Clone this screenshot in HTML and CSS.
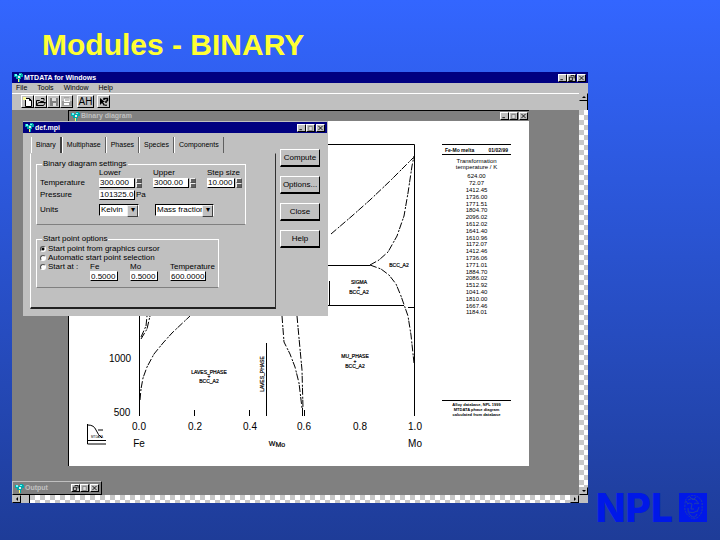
FILE: index.html
```
<!DOCTYPE html>
<html lang="en">
<head>
<meta charset="utf-8">
<title>Modules - BINARY</title>
<link rel="stylesheet" href="styles.css">
</head>
<body>
<svg class="defs" aria-hidden="true">
  <symbol id="app" viewBox="0 0 9 9"><path d="M0 1h3v1h2V0h3v1h1v3H7v2H6v3H4V6H2V4H0z" fill="#0aa"/><path d="M1 1h2v2H1zM5 1h2v1H5z" fill="#6ff"/><path d="M4 3h2v2H4z" fill="#eee"/><path d="M4 6h1v3H4z" fill="#ff6"/></symbol>
  <symbol id="min" viewBox="0 0 7 7"><path d="M1 5h3v1H1z"/></symbol>
  <symbol id="max" viewBox="0 0 7 7"><path d="M1 1h5v5H1z" fill="#ddd"/><path d="M1 1h5v1H1zM1 2h1v4H1zM5 2h1v4H5zM1 6h5v1H1z" fill="#777"/></symbol>
  <symbol id="restore" viewBox="0 0 7 7"><path d="M2.500 .5h4v3.500M1 2.500h3.500v4H1z" fill="none" stroke="#000"/></symbol>
  <symbol id="close" viewBox="0 0 7 7"><path d="M1 1l5 5M6 1L1 6" stroke="#000" fill="none"/></symbol>
</svg>
<main class="slide">
  <h1 class="title">Modules - BINARY</h1>

  <section class="app">
    <header class="bar">
      <svg class="ico"><use href="#app"/></svg><span class="name">MTDATA for Windows</span>
      <button class="wb" aria-label="Minimize"><svg><use href="#min"/></svg></button><button class="wb" aria-label="Restore"><svg><use href="#restore"/></svg></button><button class="wb last" aria-label="Close"><svg><use href="#close"/></svg></button>
    </header>
    <nav class="menu"><a href="#">File</a><a href="#">Tools</a><a href="#">Window</a><a href="#">Help</a></nav>
    <div class="view">
      <div class="work">
        <div class="tools">
          <button aria-label="New"><svg viewBox="0 0 10 10"><path d="M2.500 1.500h4l2 2v6h-6z" fill="#fff" stroke="#000"/><path d="M6.500 1.500v2h2" fill="none" stroke="#000"/><path d="M0 0h3v3H0z" fill="#ff9"/></svg></button>
          <button aria-label="Open"><svg viewBox="0 0 10 10"><path d="M.5 8.500v-5h3l1 1h3v1.500M.5 8.500l2-3h7l-2 3zM5 1.500h3v2" fill="none" stroke="#000"/></svg></button>
          <button aria-label="Save"><svg viewBox="0 0 10 10"><path d="M1 1h8v8H1z" fill="#808080"/><path d="M3 1h4v3H3zM4 6h3v3H4z" fill="#ddd"/></svg></button>
          <button aria-label="Print"><svg viewBox="0 0 10 10"><path d="M0 4h10v5H0z" fill="#999"/><path d="M2 1h5l1 4H2zM2 6h5v2H2z" fill="#fff"/><path d="M2 1h5M3 3h4" stroke="#888"/></svg></button>
          <button class="find">AH</button>
          <button aria-label="Context help"><svg viewBox="0 0 10 10"><path d="M1 1v7l2-2 2 3 1-1-2-3h2z"/><path d="M5 3V1.500h3.500v2l-1.500 1V6M7 7.500v1.500" fill="none" stroke="#000" stroke-width="1.500"/></svg></button>
        </div>
        <div class="desktop">

          <section class="win diagram">
            <header class="bar off">
              <svg class="ico"><use href="#app"/></svg><span class="name">Binary diagram</span>
              <button class="wb" aria-label="Minimize"><svg><use href="#min"/></svg></button><button class="wb" aria-label="Maximize"><svg><use href="#max"/></svg></button><button class="wb last" aria-label="Close"><svg><use href="#close"/></svg></button>
            </header>
            <div class="sheet">
              <svg class="chart" viewBox="69 121 373 345" role="img" aria-label="Fe-Mo binary phase diagram">
                <g class="ln">
                  <path d="M139.500 416V144.500H414.500V416M266.500 343v73M194.500 410v6M249.500 410v6M302.500 408v8M304.500 410v6M328 265.500h42M328 305.500h76M329.500 281v24M408 307.500h6"/>
                </g>
                <g class="ln dash">
                  <path d="M140 400L141 389L143 378L147 367L154 354L163 343L172 333L190 316"/>
                  <path d="M141 339L147 329L150 316M141 337L146 326L147 316"/>
                  <path d="M282 316L284 342L290 354L295 367L299 383L302 408"/>
                  <path d="M297 316L299 338L302 370L303 408"/>
                  <path d="M331 234L352 216L370 200L390 181L413 158"/>
                  <path d="M370 265L379 260L388 252L397 236L404 216L408 193L412 166L414 156"/>
                  <path d="M370 265L381 269L389 275L396 284L401 296L408 316L411 335L414 363"/>
                </g>
                <g class="ax">
                  <text x="120" y="362">1000</text><text x="122" y="416">500</text>
                  <text x="139" y="430">0.0</text><text x="195" y="430">0.2</text><text x="250" y="430">0.4</text><text x="304" y="430">0.6</text><text x="360" y="430">0.8</text><text x="415" y="430">1.0</text>
                  <text x="139" y="447">Fe</text><text x="415" y="447">Mo</text>
                </g>
                <g class="ph">
                  <text class="w" x="277" y="446">W<tspan dy="1">Mo</tspan></text>
                  <text x="209" y="374">LAVES_PHASE</text><text x="209" y="378">+</text><text x="209" y="383">BCC_A2</text>
                  <text x="355" y="358">MU_PHASE</text><text x="355" y="363">+</text><text x="355" y="368">BCC_A2</text>
                  <text x="359" y="284">SIGMA</text><text x="359" y="289">+</text><text x="359" y="294">BCC_A2</text>
                  <text x="399" y="267">BCC_A2</text>
                  <text transform="translate(264 374) rotate(-90)">LAVES_PHASE</text>
                </g>
                <path d="M87.500 424v20H106M88 440.500h18M88 425q6 0 8 5t6 8M98 430h5" fill="none" stroke="#000"/>
                <text class="mini" x="97" y="438">MTDATA</text>
              </svg>
              <aside class="print">
                <div class="head"><span>Fe-Mo melta</span><span>01/02/99</span></div>
                <table>
                  <thead><tr><th>Transformation<br>temperature / K</th></tr></thead>
                  <tbody>
                    <tr><td>624.00</td></tr><tr><td>72.07</td></tr><tr><td>1412.45</td></tr><tr><td>1736.00</td></tr><tr><td>1771.51</td></tr><tr><td>1804.70</td></tr><tr><td>2096.02</td></tr><tr><td>1612.02</td></tr><tr><td>1641.40</td></tr><tr><td>1610.96</td></tr><tr><td>1172.07</td></tr><tr><td>1412.46</td></tr><tr><td>1736.06</td></tr><tr><td>1771.01</td></tr><tr><td>1884.70</td></tr><tr><td>2086.02</td></tr><tr><td>1512.92</td></tr><tr><td>1041.40</td></tr><tr><td>1810.00</td></tr><tr><td>1667.46</td></tr><tr><td>1184.01</td></tr>
                  </tbody>
                </table>
                <p class="foot">Alloy database, NPL 1999<br>MTDATA phase diagram<br>calculated from database</p>
              </aside>
            </div>
          </section>

          <section class="win output">
            <header class="bar off">
              <svg class="ico"><use href="#app"/></svg><span class="name">Output</span>
              <button class="wb" aria-label="Restore"><svg><use href="#restore"/></svg></button><button class="wb" aria-label="Maximize"><svg><use href="#max"/></svg></button><button class="wb last" aria-label="Close"><svg><use href="#close"/></svg></button>
            </header>
          </section>

          <section class="win dialog">
            <header class="bar">
              <svg class="ico"><use href="#app"/></svg><span class="name">def.mpi</span>
              <button class="wb" aria-label="Minimize"><svg><use href="#min"/></svg></button><button class="wb" aria-label="Maximize"><svg><use href="#max"/></svg></button><button class="wb last" aria-label="Close"><svg><use href="#close"/></svg></button>
            </header>
            <form class="body">
              <div class="left">
                <div class="tabs"><button type="button" class="on">Binary</button><button type="button">Multiphase</button><button type="button">Phases</button><button type="button">Species</button><button type="button">Components</button></div>
                <div class="panel">
                  <fieldset>
                    <legend>Binary diagram settings</legend>
                    <div class="grid">
                      <span></span><label for="lo">Lower</label><label for="up">Upper</label><label for="st">Step size</label>
                      <span>Temperature</span>
                      <span class="num"><input id="lo" value="300.000"><span class="spin"><button type="button" aria-label="Lower up"></button><button type="button" aria-label="Lower down"></button></span></span>
                      <span class="num"><input id="up" value="3000.00"><span class="spin"><button type="button" aria-label="Upper up"></button><button type="button" aria-label="Upper down"></button></span></span>
                      <span class="num short"><input id="st" value="10.000"><span class="spin"><button type="button" aria-label="Step up"></button><button type="button" aria-label="Step down"></button></span></span>
                      <label for="pr">Pressure</label><span class="num wide"><input id="pr" value="101325.0"><span>Pa</span></span>
                      <label for="un">Units</label>
                      <span class="combo"><select id="un"><option>Kelvin</option></select></span>
                      <span class="combo big"><select aria-label="Composition units"><option>Mass fraction</option></select></span>
                    </div>
                  </fieldset>
                  <fieldset class="start">
                    <legend>Start point options</legend>
                    <label class="radio"><input type="radio" name="s" checked>Start point from graphics cursor</label>
                    <label class="radio"><input type="radio" name="s">Automatic start point selection</label>
                    <div class="at">
                      <label class="radio"><input type="radio" name="s">Start at :</label>
                      <label>Fe<input value="0.5000"></label><label>Mo<input value="0.5000"></label><label class="t">Temperature<input value="600.0000"></label>
                    </div>
                  </fieldset>
                </div>
              </div>
              <div class="acts"><button type="button">Compute</button><button type="button">Options...</button><button type="button">Close</button><button type="button">Help</button></div>
            </form>
          </section>
        </div>
      </div>
      <div class="scroll v"><button aria-label="Scroll up"></button><i></i><b></b><button aria-label="Scroll down"></button></div>
    </div>
    <div class="scroll h"><button aria-label="Scroll left"></button><i></i><b></b><button aria-label="Scroll right"></button><em></em></div>
  </section>

  <div class="npl"><span>NPL</span>
    <svg viewBox="0 0 28 29"><path d="M0 0h28v29H0z" fill="#0018e8"/><g fill="none" stroke="#1f3fae" stroke-width="1"><path d="M9 4q5-3 10 0t4 9q1 7-4 11-5 4-9-1-5-3-4-11 0-6 3-8z" stroke-dasharray="2 1"/><path d="M9 7q4-3 8 0l3 4M8 11q3-2 5 0m2 0q2-2 4 0M13 11l-1 5h3M10 19q4 2 8-1M9 15q-1 5 3 8t6-2M7 8l2 3M20 14l-2 5M11 4l3 3 3-3"/></g></svg>
  </div>
</main>
</body>
</html>
```
FILE: styles.css
```
* { box-sizing: border-box; }
body { margin: 0; font: 8px/10px "Liberation Sans", Arial, sans-serif; color: #000; }
.defs { position: absolute; width: 0; height: 0; }
button, input, select { font: inherit; color: inherit; border-radius: 0; margin: 0; padding: 0; }
button { border: 1px solid; border-color: #fff #000 #000 #fff; background: #c0c0c0; }

.slide { position: relative; display: flex; flex-direction: column; min-height: 100vh; padding: 28px 12px 37px; background: linear-gradient(#3366ff, #1e3c98); }
.title { margin: 0 0 10px 30px; font-size: 30px; line-height: 34px; font-weight: bold; color: #ffff33; }

.app { width: 576px; max-width: 100%; flex: 1; display: flex; flex-direction: column; background: #c0c0c0; }
.bar { display: flex; align-items: center; height: 11px; padding: 0 2px; background: #000080; color: #fff; font-weight: bold; font-size: 7px; }
.bar .name { flex: 1; white-space: nowrap; }
.bar.off { background: #808080; color: #c0c0c0; }
.ico { width: 9px; height: 9px; margin-right: 1px; }
.wb { width: 9px; height: 8px; display: flex; color: #000; }
.wb svg { width: 7px; height: 6px; }
.wb.last { margin-left: 1px; }
.menu { display: flex; gap: 10px; height: 10px; padding: 0 4px; font-size: 7px; }
.menu a { color: #000; text-decoration: none; }
.view { flex: 1; display: flex; }
.work { flex: 1; display: flex; flex-direction: column; }
.tools { display: flex; height: 17px; padding: 1px 9px; border-top: 1px solid #fff; }
.tools button { width: 13px; height: 13px; display: flex; align-items: center; justify-content: center; }
.tools svg { width: 10px; height: 10px; }
.tools .find { width: 17px; margin: 0 3px 0 4px; font-size: 10px; }

.desktop { position: relative; flex: 1; background: #808080; }
.win { position: absolute; }
.diagram { left: 56px; top: 0; width: 461px; border-top: 1px solid #000; border-left: 1px solid #000; }
.sheet { display: flex; background: #fff; }
.diagram .bar { height: 10px; padding-right: 1px; }
.chart { flex: 1; height: 345px; }
.ln { fill: none; stroke: #000; }
.dash { stroke-dasharray: 7 2 2 1; }
.ax { font-size: 10px; text-anchor: middle; }
.ph { font-size: 5px; text-anchor: middle; stroke: #000; stroke-width: .2px; }
.ph .w { font-size: 7px; }
.mini { font-size: 3px; text-anchor: middle; }
.print { display: flex; flex-direction: column; width: 69px; margin: 23px 18px 0 0; font-size: 6px; line-height: 6px; }
.head { display: flex; justify-content: space-between; height: 11px; padding: 2px 3px; border: solid #000; border-width: 1px 0; font-size: 5px; font-weight: bold; }
.print table { width: 100%; height: 161px; border-collapse: collapse; text-align: center; }
.print th { height: 18px; padding: 0; font-weight: normal; }
.print td { padding: 0; }
.foot { margin: 84px 0 0; padding-top: 1px; border-top: 1px solid #000; font-size: 4px; line-height: 5px; font-weight: bold; text-align: center; }

.output { left: 0; bottom: 0; width: 90px; border: 1px solid; border-color: #c0c0c0 #000 #000 #c0c0c0; }
.output .bar { height: 12px; }

.dialog { left: 11px; top: 11px; width: 305px; background: #c0c0c0; border: solid #c0c0c0; border-width: 1px 1px 0 0; }
.body { display: flex; padding: 4px 7px 7px; }
.left { width: 247px; }
.tabs { display: flex; height: 16px; padding-left: 1px; }
.tabs button { border: 0; border-right: 1px solid #606060; border-left: 1px solid #fff; padding: 0 4px; font-size: 7px; white-space: nowrap; background: none; }
.tabs .on { border-right: 2px solid #404040; }
.panel { height: 156px; padding: 5px; border: 1px solid; border-color: #c0c0c0 #303030 #202020 #fff; border-bottom-width: 2px; }
fieldset { margin: 0; padding: 0 3px; border: 1px solid; border-color: #fff #fff #808080 #fff; height: 66px; width: 210px; min-width: 0; }
legend { padding: 0 1px; margin-left: 2px; }
.grid { display: grid; grid-template-columns: 59px 54px 54px 36px; grid-template-rows: 8px 12px 12px 18px; align-items: center; }
.grid > * { white-space: nowrap; }
.num { display: flex; align-items: center; gap: 1px; }
.wide { grid-column: 2 / -1; }
input:not([type]) { width: 36px; height: 10px; padding: 0; border: 1px solid #fff; border-bottom-color: #000; border-right-color: #000; background: #fff; }
.num.short input { width: 28px; }
.spin { display: flex; flex-direction: column; }
.spin button { width: 6px; height: 5px; border-color: #eee #505050 #505050 #eee; background: #606060; }
.combo { position: relative; width: 40px; height: 12px; background: #fff; border: 1px solid; border-color: #000 #fff #fff #000; }
.combo.big { width: 59px; margin-left: 2px; }
.combo select { appearance: none; width: 100%; height: 10px; padding-left: 1px; border: 0; background: none; display: block; }
.combo::after { content: "▾"; position: absolute; right: 0; top: 0; width: 9px; height: 10px; background: #c0c0c0; border: 1px solid; border-color: #eee #404040 #404040 #eee; line-height: 8px; text-align: center; pointer-events: none; }
.start { width: 183px; height: 54px; margin-top: 9px; }
.radio { display: flex; align-items: center; gap: 2px; height: 9px; white-space: nowrap; }
.radio input { appearance: none; width: 6px; height: 6px; border: 1px solid; border-color: #505050 #fff #fff #505050; border-radius: 50%; background: #fff; }
.radio input:checked { background: radial-gradient(#000 0 1px, #fff 2px); }
.at { display: flex; }
.at > label:not(.radio) { width: 40px; line-height: 9px; }
.at .radio { width: 50px; }
.at input:not([type]) { display: block; width: 28px; }
.at .t input:not([type]) { width: 36px; }
.acts { display: flex; flex-direction: column; gap: 9px; margin: 12px 0 0 4px; }
.acts button { width: 40px; height: 18px; border-right-width: 1px; border-bottom-width: 2px; }

.scroll { display: flex; }
.scroll button { width: 9px; height: 8px; border-color: #c0c0c0 #000 #000 #c0c0c0; position: relative; }
.scroll button::before { content: ""; display: block; width: 0; margin: auto; border: 2px solid transparent; }
.scroll b { flex: 1; background: repeating-conic-gradient(#fff 0 25%, #c8c8c8 0 50%) 0 0 / 10px 10px; }
.v { flex-direction: column; width: 9px; }
.v i { height: 9px; border-right: 1px solid #000; }
.v button:first-child::before { border-top: 0; border-bottom-color: #000; }
.v button:last-child::before { border-bottom: 0; border-top-color: #000; }
.h { height: 8px; }
.h i { width: 9px; border-right: 1px solid #000; }
.h em { width: 9px; }
.h button:first-child::before { border-left: 0; border-right-color: #000; }
.h button:nth-last-child(2)::before { border-right: 0; border-left-color: #000; }

.npl { position: absolute; right: 13px; bottom: 18px; display: flex; gap: 6px; align-items: center; font: 800 39px/29px Inter, sans-serif; color: #0018e8; }
.npl svg { width: 28px; height: 29px; }
```
